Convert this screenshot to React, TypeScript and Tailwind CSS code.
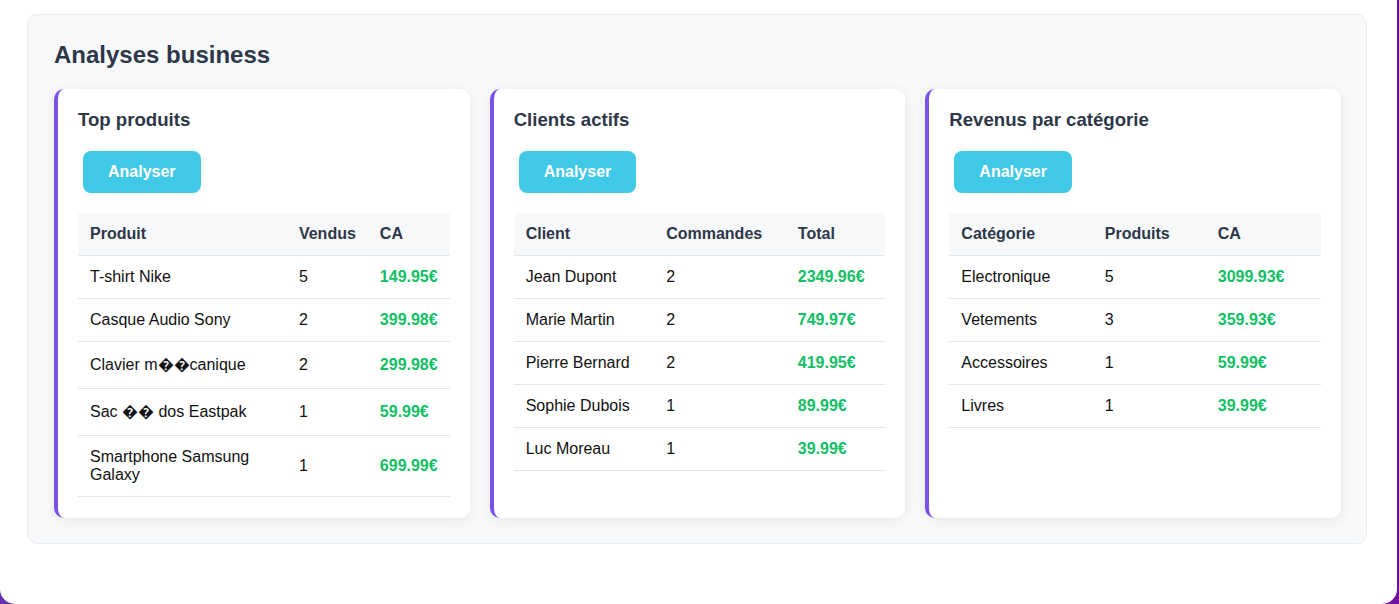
import React from "react";

type Row = [string, string, string];

interface PanelProps {
  title: string;
  headers: [string, string, string];
  rows: Row[];
}

const panels: PanelProps[] = [
  {
    title: "Top produits",
    headers: ["Produit", "Vendus", "CA"],
    rows: [
      ["T-shirt Nike", "5", "149.95€"],
      ["Casque Audio Sony", "2", "399.98€"],
      ["Clavier m\uFFFD\uFFFDcanique", "2", "299.98€"],
      ["Sac \uFFFD\uFFFD dos Eastpak", "1", "59.99€"],
      ["Smartphone Samsung Galaxy", "1", "699.99€"],
    ],
  },
  {
    title: "Clients actifs",
    headers: ["Client", "Commandes", "Total"],
    rows: [
      ["Jean Dupont", "2", "2349.96€"],
      ["Marie Martin", "2", "749.97€"],
      ["Pierre Bernard", "2", "419.95€"],
      ["Sophie Dubois", "1", "89.99€"],
      ["Luc Moreau", "1", "39.99€"],
    ],
  },
  {
    title: "Revenus par catégorie",
    headers: ["Catégorie", "Produits", "CA"],
    rows: [
      ["Electronique", "5", "3099.93€"],
      ["Vetements", "3", "359.93€"],
      ["Accessoires", "1", "59.99€"],
      ["Livres", "1", "39.99€"],
    ],
  },
];

function Panel({ title, headers, rows }: PanelProps) {
  return (
    <div className="flex-1 min-w-0 bg-white rounded-[10px] border-l-4 border-[#7b52e8] px-5 pt-5 pb-[21px] shadow-[0_2px_12px_rgba(0,0,0,0.07)]">
      <h3 className="text-[18.6px] leading-[22px] font-bold text-[#2d3748] mb-[15px]">{title}</h3>
      <button className="m-[5px] h-[42px] px-[25px] rounded-lg bg-[#40c9e6] text-white font-bold text-base">
        Analyser
      </button>
      <table className="w-full mt-[15px] border-collapse text-base">
        <thead>
          <tr className="bg-[#f7f8fa] border-b border-[#e2e5ea]">
            {headers.map((h) => (
              <th key={h} className="text-left font-bold text-[#2d3748] px-3 py-3 leading-[18px]">
                {h}
              </th>
            ))}
          </tr>
        </thead>
        <tbody>
          {rows.map((r) => {
            // rows with broken accents render a taller fallback glyph
            const tall = r[0].includes("\uFFFD");
            const cell = tall ? "px-3 py-3 leading-[22px]" : "px-3 py-3 leading-[18px]";
            return (
              <tr key={r[0]} className="border-b border-[#e2e5ea]">
                <td className={`${cell} text-[#111]`}>{r[0]}</td>
                <td className={`${cell} text-[#111]`}>{r[1]}</td>
                <td className={`${cell} font-bold text-[#10c064]`}>{r[2]}</td>
              </tr>
            );
          })}
        </tbody>
      </table>
    </div>
  );
}

export default function App() {
  return (
    <div
      className="min-h-[604px] bg-gradient-to-r from-[#6a2fb0] to-[#6f12a0]"
      style={{ fontFamily: '"Liberation Sans", Arial, sans-serif' }}
    >
      <div className="w-[1397px] h-[604px] bg-white rounded-b-[15px] pt-[14px] pl-[27px]">
        <section className="w-[1340px] bg-[#f7f8fa] border border-[#e9ecef] rounded-[10px] pt-[25px] pb-[25px] pl-[26px] pr-[25px]">
          <h2 className="text-2xl leading-[29px] font-bold text-[#2d3748] mb-5">Analyses business</h2>
          <div className="flex gap-5 items-stretch">
            {panels.map((p) => (
              <Panel key={p.title} {...p} />
            ))}
          </div>
        </section>
      </div>
    </div>
  );
}
